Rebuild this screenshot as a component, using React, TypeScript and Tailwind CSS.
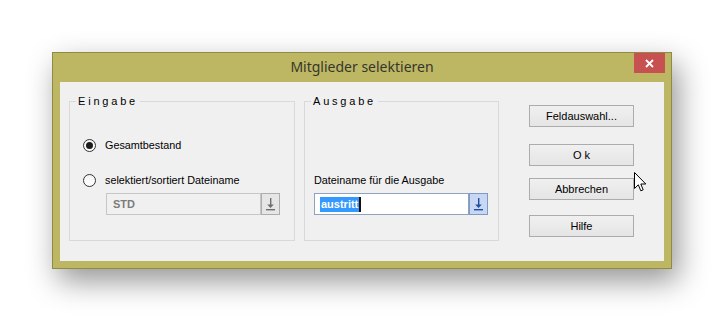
import React from "react";

const font = { fontFamily: '"Liberation Sans", Arial, sans-serif' };

const DropIcon = ({ color }: { color: string }) => (
  <svg width="11" height="14" viewBox="0 0 11 14">
    <rect x="5" y="1" width="1.4" height="7" fill={color} />
    <path d="M2.2 7.5 L8.8 7.5 L5.5 11 Z" fill={color} />
    <rect x="1" y="12" width="9" height="1.4" fill={color} />
  </svg>
);

const Radio = ({ checked }: { checked?: boolean }) => (
  <span className="w-[13px] h-[13px] rounded-full border border-[#333333] bg-gradient-to-b from-[#f4f4f4] to-white flex items-center justify-center shrink-0">
    {checked && <span className="w-[7px] h-[7px] rounded-full bg-[#1c1c1c]" />}
  </span>
);

const Btn = ({ label, className = "" }: { label: string; className?: string }) => (
  <button
    className={`w-[105px] h-[22px] border border-[#acacac] bg-gradient-to-b from-[#f0f0f0] to-[#e5e5e5] text-[11px] text-black leading-none ${className}`}
  >
    {label}
  </button>
);

const Group = ({
  title,
  className = "",
  children,
}: {
  title: string;
  className?: string;
  children?: React.ReactNode;
}) => (
  <div className={`relative h-[140px] border border-[#d9d9d9] ${className}`}>
    <span className="absolute -top-[8px] left-[6px] px-[2px] bg-[#f0f0f0] text-[11px] leading-[14px] tracking-[2.8px] text-black">
      {title}
    </span>
    {children}
  </div>
);

export default function App() {
  return (
    <div
      className="relative w-[724px] h-[321px] bg-white pl-[52px] pt-[52px] overflow-hidden"
      style={font}
    >
      <div className="w-[620px] h-[217px] bg-[#bdb663] border border-[#8f8a46] shadow-[6px_12px_28px_rgba(0,0,0,0.42)] flex flex-col">
        {/* title bar */}
        <div className="relative h-[29px] flex items-center justify-center">
          <span
            className="text-[14px] text-[#36362c] pb-[2px]"
            style={{ fontFamily: '"Noto Sans", "Open Sans", sans-serif' }}
          >
            Mitglieder selektieren
          </span>
          <div className="absolute top-0 right-[6px] w-[31px] h-[20px] bg-[#c75050] flex items-center justify-center">
            <svg width="9" height="9" viewBox="0 0 9 9">
              <path d="M1 1 L8 8 M8 1 L1 8" stroke="white" strokeWidth="1.8" />
            </svg>
          </div>
        </div>

        {/* content */}
        <div className="mx-[7px] h-[179px] bg-[#f0f0f0] flex pt-[19px] pl-[9px]">
          <Group title="Eingabe" className="w-[226px]">
            <div className="pl-[13px] pt-[37px] text-[10.8px] text-black">
              <div className="flex items-center gap-[9px] h-[13px]">
                <Radio checked />
                <span>Gesamtbestand</span>
              </div>
              <div className="flex items-center gap-[9px] h-[13px] mt-[22px]">
                <Radio />
                <span>selektiert/sortiert Dateiname</span>
              </div>
              <div className="flex ml-[23px] mt-[6px] h-[22px]">
                <div className="w-[155px] border border-[#c6c6c6] bg-[#f0f0f0] flex items-center pl-[6px] font-bold text-[11px] text-[#7c7c7c]">
                  STD
                </div>
                <div className="w-[19px] border border-[#adadad] bg-[#e6e6e6] flex items-center justify-center">
                  <DropIcon color="#6e6e6e" />
                </div>
              </div>
            </div>
          </Group>

          <Group title="Ausgabe" className="w-[195px] ml-[9px]">
            <div className="pl-[9px] pt-[71px] text-[10.8px] text-black">
              <div className="leading-[14px]">Dateiname für die Ausgabe</div>
              <div className="flex mt-[6px] h-[22px]">
                <div className="w-[155px] border border-[#8ea3c0] bg-white flex items-center pl-[5px] text-[11px]">
                  <span className="bg-[#3399ff] text-white font-bold leading-[15px] px-[1px]">
                    austritt
                  </span>
                  <span className="w-[2px] h-[15px] bg-[#1a1008]" />
                </div>
                <div className="w-[19px] border border-[#7f9bc4] bg-[#c8d8f4] flex items-center justify-center">
                  <DropIcon color="#1f4f9e" />
                </div>
              </div>
            </div>
          </Group>

          <div className="ml-[30px] pt-[4px] flex flex-col">
            <Btn label="Feldauswahl..." />
            <Btn label="O k" className="mt-[17px]" />
            <Btn label="Abbrechen" className="mt-[12px]" />
            <Btn label="Hilfe" className="mt-[15px]" />
          </div>
        </div>
      </div>

      {/* mouse cursor */}
      <svg
        className="absolute left-[634px] top-[172px]"
        width="13"
        height="21"
        viewBox="0 0 13 21"
      >
        <path
          d="M0.5 0.5 L0.5 16.5 L4.3 12.8 L6.8 18.8 L9.2 17.8 L6.8 12 L11.8 12 Z"
          fill="white"
          stroke="black"
          strokeWidth="1"
          strokeLinejoin="miter"
        />
      </svg>
    </div>
  );
}
